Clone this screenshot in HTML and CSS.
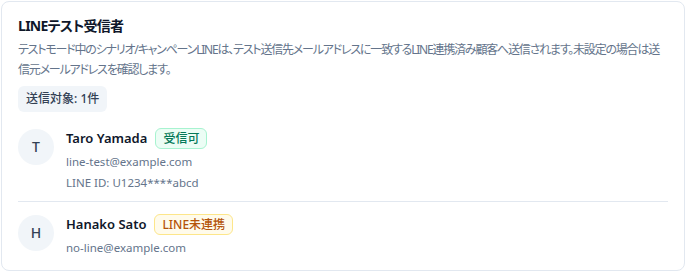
FILE: index.html
```html
<!DOCTYPE html>
<html lang="ja">

<head>
    <meta charset="UTF-8">
    <meta name="viewport" content="width=device-width, initial-scale=1.0">
    <title>LINEテスト受信者</title>
    <link rel="stylesheet" href="styles.css">
</head>

<body>
    <div class="card">
        <h2 class="title">LINEテスト受信者</h2>
        <p class="desc">テストモード中のシナリオ/キャンペーンLINEは、テスト送信先メールアドレスに一致するLINE連携済み顧客へ送信されます。未設定の場合は送信元メールアドレスを確認します。</p>
        <span class="count">送信対象: 1件</span>

        <ul class="recipients">
            <li class="row">
                <div class="avatar">T</div>
                <div class="info">
                    <div class="name-line">
                        <span class="name">Taro Yamada</span>
                        <span class="tag tag-ok">受信可</span>
                    </div>
                    <div class="meta">line-test@example.com</div>
                    <div class="meta">LINE ID: U1234****abcd</div>
                </div>
            </li>
            <li class="row">
                <div class="avatar">H</div>
                <div class="info">
                    <div class="name-line">
                        <span class="name">Hanako Sato</span>
                        <span class="tag tag-warn">LINE未連携</span>
                    </div>
                    <div class="meta">no-line@example.com</div>
                </div>
            </li>
        </ul>
    </div>
</body>

</html>
```

FILE: styles.css
```css
body {
    margin: 0;
    padding: 1px;
    font-family: "Noto Sans", "Noto Sans CJK JP", sans-serif;
    font-feature-settings: "palt";
    color: #0f172a;
    background: #fff;
}

.card {
    border: 1px solid #e2e8f0;
    border-radius: 8px;
    padding: 14px 16px 0;
}

.title {
    margin: 0;
    font-size: 14px;
    line-height: 20px;
    font-weight: 700;
    letter-spacing: -0.7px;
}

.desc {
    margin: 4px 0 0;
    font-size: 12px;
    line-height: 20px;
    letter-spacing: -1.2px;
    color: #64748b;
}

.count {
    display: inline-block;
    margin-top: 6px;
    padding: 4px 8px;
    font-size: 12px;
    line-height: 18px;
    font-weight: 500;
    color: #334155;
    background: #f1f5f9;
    border-radius: 6px;
}

.recipients {
    list-style: none;
    margin: 4px 0 0;
    padding: 0;
}

.row {
    display: flex;
    align-items: flex-start;
    gap: 12px;
    padding: 12px 0 8px;
    border-bottom: 1px solid #e2e8f0;
}

.row:last-child {
    padding-bottom: 12px;
    border-bottom: none;
}

.avatar {
    flex: none;
    width: 36px;
    height: 36px;
    margin-top: 1px;
    border-radius: 50%;
    background: #f1f5f9;
    color: #334155;
    font-size: 14px;
    font-weight: 500;
    line-height: 36px;
    text-align: center;
}

.name-line {
    display: flex;
    align-items: center;
    gap: 8px;
}

.name {
    font-size: 13px;
    font-weight: 600;
    line-height: 21px;
}

.tag {
    padding: 1px 7px;
    font-size: 12px;
    line-height: 17px;
    font-weight: 500;
    border: 1px solid;
    border-radius: 6px;
}

.tag-ok {
    color: #047857;
    background: #ecfdf5;
    border-color: #a7f3d0;
}

.tag-warn {
    color: #b45309;
    background: #fffbeb;
    border-color: #fde68a;
}

.meta {
    font-size: 11.5px;
    line-height: 21px;
    color: #64748b;
}

.name-line + .meta {
    margin-top: 2px;
}
```
